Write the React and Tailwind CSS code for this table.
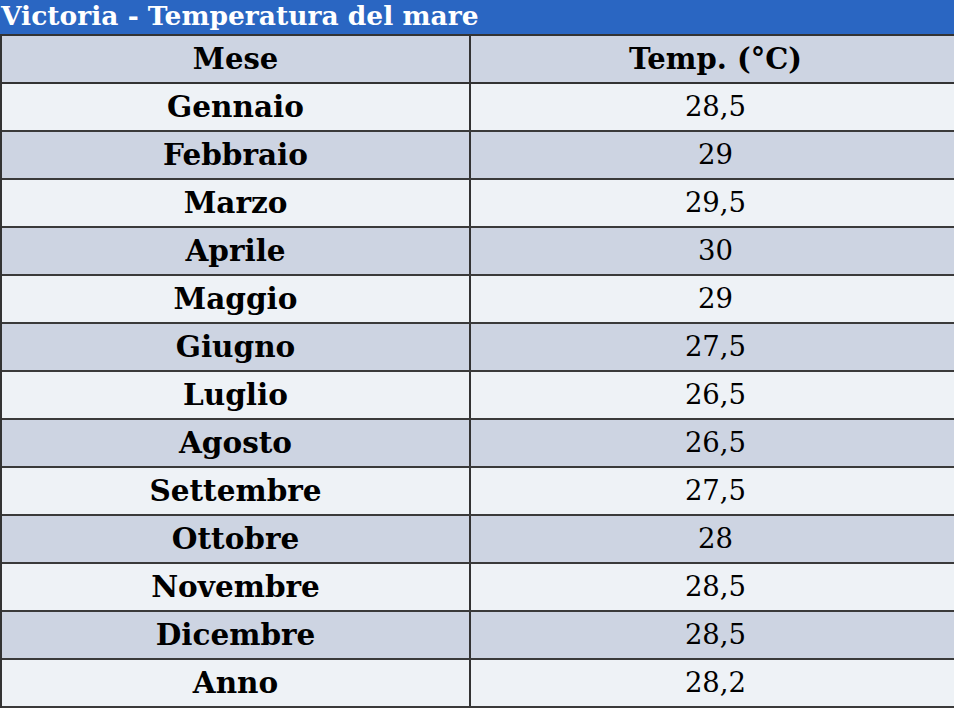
const rows = [
  ["Gennaio", "28,5"],
  ["Febbraio", "29"],
  ["Marzo", "29,5"],
  ["Aprile", "30"],
  ["Maggio", "29"],
  ["Giugno", "27,5"],
  ["Luglio", "26,5"],
  ["Agosto", "26,5"],
  ["Settembre", "27,5"],
  ["Ottobre", "28"],
  ["Novembre", "28,5"],
  ["Dicembre", "28,5"],
  ["Anno", "28,2"],
];

const font = { fontFamily: '"DejaVu Serif", "Liberation Serif", serif' };

export default function App() {
  return (
    <div className="w-[954px] h-[708px] overflow-hidden bg-white" style={font}>
      <div className="h-[34px] bg-[#2a66c2] pl-[1px] text-[26.5px] font-bold leading-[32px] text-white whitespace-nowrap">
        Victoria - Temperatura del mare
      </div>
      <div className="w-[960px] border-l-2 border-t-2 border-[#333]">
        <div className="grid h-[48px] grid-cols-[469px_1fr] border-b-2 border-[#333] bg-[#cdd4e2] text-[29px] font-bold text-black">
          <div className="flex items-center justify-center border-r-2 border-[#333] pt-[2px]">Mese</div>
          <div className="flex items-center justify-center pt-[2px]">Temp. (°C)</div>
        </div>
        {rows.map(([m, t], i) => (
          <div
            key={m}
            className={
              "grid h-[48px] grid-cols-[469px_1fr] border-b-2 border-[#3a3a3a] text-black " +
              (i % 2 === 0 ? "bg-[#eef2f6]" : "bg-[#cdd4e2]")
            }
          >
            <div className="flex items-center justify-center border-r-2 border-[#333] text-[29.5px] font-bold">{m}</div>
            <div className="flex items-center justify-center text-[27.5px]">{t}</div>
          </div>
        ))}
      </div>
    </div>
  );
}
